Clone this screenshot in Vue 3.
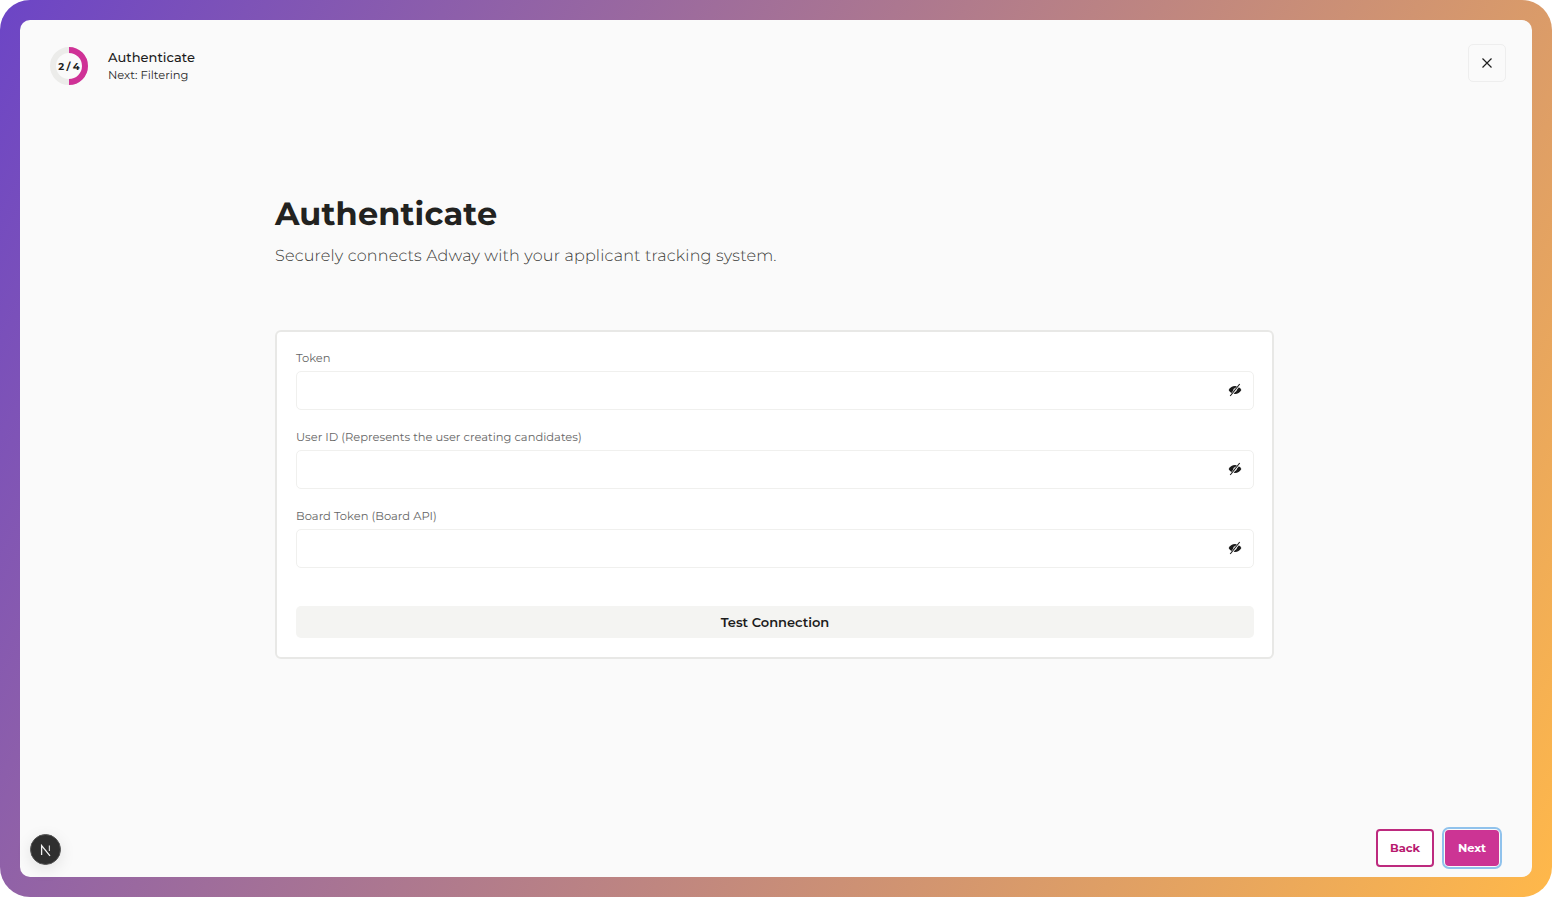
<script setup>
const fields = [
  { label: 'Token' },
  { label: 'User ID (Represents the user creating candidates)' },
  { label: 'Board Token (Board API)' },
]
</script>

<template>
  <div class="frame">
    <main class="panel">
      <header class="top">
        <div class="step">
          <div class="ring">
            <svg width="38" height="38" viewBox="0 0 38 38">
              <circle cx="19" cy="19" r="16" fill="none" stroke="#ececea" stroke-width="6" />
              <path d="M19 3A16 16 0 0 1 19 35" fill="none" stroke="#cf3196" stroke-width="6" />
            </svg>
            <span class="count">2 / 4</span>
          </div>
          <div class="step-text">
            <div class="step-title">Authenticate</div>
            <div class="step-next">Next: Filtering</div>
          </div>
        </div>
        <button class="close" aria-label="Close">
          <svg width="12" height="12" viewBox="0 0 12 12">
            <path d="M1.5 1.5L10.5 10.5M10.5 1.5L1.5 10.5" stroke="#1f1f1f" stroke-width="1.2" fill="none" />
          </svg>
        </button>
      </header>

      <section class="body">
        <h1 class="title">Authenticate</h1>
        <p class="sub">Securely connects Adway with your applicant tracking system.</p>

        <div class="card">
          <div class="fields">
            <div v-for="f in fields" :key="f.label" class="field">
              <label class="label">{{ f.label }}</label>
              <div class="input">
                <svg class="eye" width="14" height="14" viewBox="0 0 14 14">
                  <path d="M0.6 7C2.2 4.4 4.4 3 7 3s4.8 1.4 6.4 4C11.8 9.6 9.6 11 7 11S2.2 9.6 0.6 7z" fill="#1a1a1a" />
                  <circle cx="7" cy="7" r="1.7" fill="#fff" />
                  <path d="M12 1L2.5 13" stroke="#fff" stroke-width="2.2" />
                  <path d="M11.7 1L2.2 13" stroke="#1a1a1a" stroke-width="1.1" />
                </svg>
              </div>
            </div>
          </div>
          <button class="test">Test Connection</button>
        </div>
      </section>

      <footer class="bottom">
        <button class="btn back">Back</button>
        <button class="btn next">Next</button>
      </footer>

      <div class="badge">
        <svg width="14" height="14" viewBox="0 0 14 14">
          <path d="M2.6 12V2.6L11 12.8" stroke="#f2f2f2" stroke-width="1.3" fill="none" />
          <path d="M10.4 2.4V8" stroke="#cfcfcf" stroke-width="1.2" fill="none" />
        </svg>
      </div>
    </main>
  </div>
</template>

<style>
html, body { margin: 0; background: #fff; }
</style>

<style scoped>
.frame {
  box-sizing: border-box;
  width: 1552px;
  height: 897px;
  padding: 20px;
  border-radius: 30px;
  background: linear-gradient(120deg, #6c45c6 0%, #ffb84a 100%);
  font-family: Montserrat, "Inter", "Open Sans", sans-serif;
  text-rendering: geometricPrecision;
  overflow: hidden;
}
.panel {
  position: relative;
  box-sizing: border-box;
  height: 857px;
  border-radius: 10px;
  background: #fafafa;
  display: flex;
  flex-direction: column;
  padding: 24px 26px 10px 30px;
}
.top { display: flex; justify-content: space-between; align-items: flex-start; }
.step { display: flex; align-items: center; gap: 20px; padding-top: 3px; }
.ring { position: relative; width: 38px; height: 38px; }
.ring svg { display: block; }
.count {
  position: absolute; inset: 0; display: flex; align-items: center; justify-content: center;
  font-size: 10px; font-weight: 700; color: #1c1c1c; word-spacing: -.5px;
}
.step-title { font-size: 13px; font-weight: 500; color: #1c1c1c; line-height: 18px; letter-spacing: .03px; }
.step-next { font-size: 11.5px; color: #2a2a2a; line-height: 17px; }
.close {
  width: 38px; height: 38px; padding: 0; display: flex; align-items: center; justify-content: center;
  background: #fafafa; border: 1px solid #eeeeee; border-radius: 5px;
}
.body { width: 999px; margin: 110px 0 0 225px; flex: 1; }
.title { margin: 0; font-size: 32px; line-height: 40px; font-weight: 700; color: #222220; letter-spacing: .15px; }
.sub { margin: 11px 0 0; font-size: 16px; line-height: 22px; font-weight: 300; color: #3a3a38; letter-spacing: .18px; }
.card {
  box-sizing: border-box;
  margin-top: 62px;
  height: 329px;
  padding: 16px 18px 16px 19px;
  background: #fff;
  border: 2px solid #e8e8e6;
  border-radius: 6px;
}
.fields { display: flex; flex-direction: column; gap: 17px; }
.label { display: block; font-size: 11.5px; line-height: 20px; color: #666; }
.input {
  box-sizing: border-box;
  height: 39px;
  margin-top: 3px;
  border: 1px solid #f0f0ee;
  border-radius: 5px;
  background: #fff;
  display: flex; align-items: center; justify-content: flex-end;
  padding-right: 11px;
}
.eye { margin-bottom: 2px; }
.test {
  display: block; width: 100%; height: 32px; margin-top: 38px;
  border: 0; border-radius: 5px; background: #f4f4f2;
  font: 600 13px Montserrat, "Inter", "Open Sans", sans-serif; color: #1c1c1c;
}
.bottom { display: flex; justify-content: flex-end; align-items: center; gap: 11px; padding-right: 7px; }
.btn {
  box-sizing: border-box; border-radius: 4px;
  font: 700 11.5px Montserrat, "Inter", "Open Sans", sans-serif;
}
.back { width: 58px; height: 38px; background: #fff; border: 2px solid #bd2a7e; color: #b8196f; }
.next {
  width: 54px; height: 36px; margin: 0; background: #cc3494; border: 0; color: #fff;
  outline: 2px solid #90c2ec; outline-offset: 1px;
}
.badge {
  position: absolute; left: 10px; bottom: 12px; box-sizing: border-box; width: 31px; height: 31px;
  border-radius: 50%; background: #2f2f2f; border: 1px solid #555;
  display: flex; align-items: center; justify-content: center;
  box-shadow: 0 4px 16px rgba(0,0,0,.1);
}
</style>
